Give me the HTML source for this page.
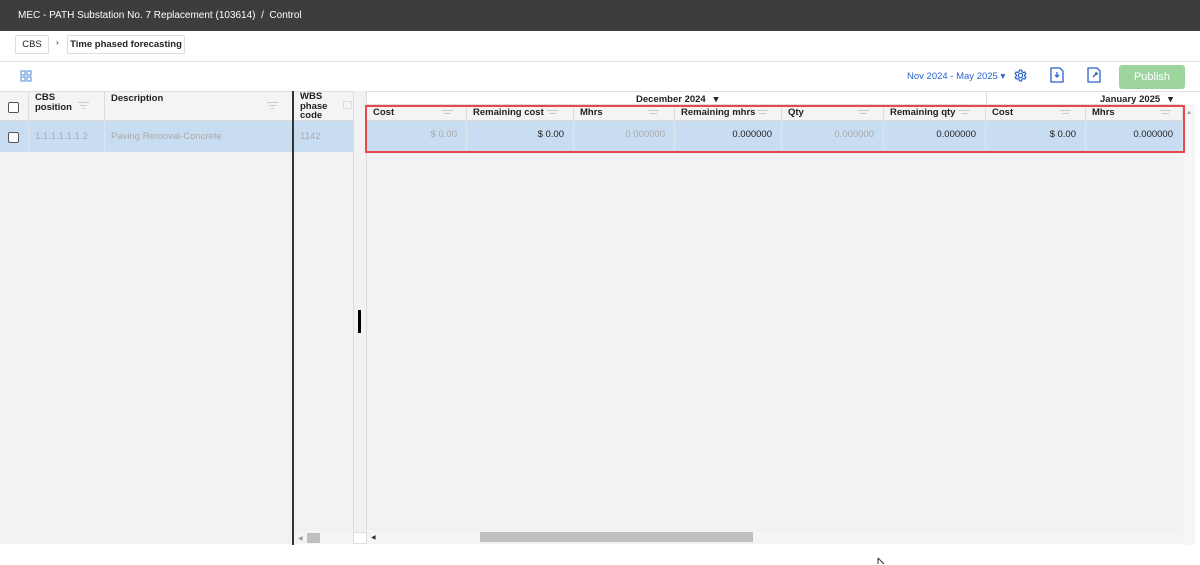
<!DOCTYPE html><html><head><style>
*{box-sizing:border-box;margin:0;padding:0}
body{width:1200px;height:565px;position:relative;overflow:hidden;background:#fff;font-family:"Liberation Sans",sans-serif;font-size:9.5px;color:#222}
.a{position:absolute}
.hd{font-weight:bold;font-size:9.5px;color:#222}
.f{position:absolute;width:11px;height:7px}
.f i{display:block;height:1px;background:#ccc;margin:0 auto 2px}
.g{color:#aaa}
.cell{position:absolute;top:121px;height:31px;line-height:28px;text-align:right;font-size:9.5px;border-right:1px solid #dde6ee;padding-right:9px}
.ch{position:absolute;top:105px;height:16px;border-right:1px solid #ddd;padding-left:6px;font-weight:bold;line-height:15px}
</style></head><body>
<div class="a" style="left:0;top:0;width:1200px;height:31px;background:#3d3d3d"></div>
<div class="a" style="left:18px;top:10px;color:#fff;font-size:10px">MEC - PATH Substation No. 7 Replacement (103614) &nbsp;/&nbsp; Control</div>
<div class="a" style="left:15px;top:35px;width:34px;height:19px;border:1px solid #ddd;border-radius:2px;text-align:center;line-height:17px">CBS</div>
<div class="a" style="left:56px;top:38px;font-size:8px">›</div>
<div class="a" style="left:67px;top:35px;width:118px;height:19px;border:1px solid #ddd;border-radius:2px;text-align:center;line-height:17px;font-weight:bold">Time phased forecasting</div>
<div class="a" style="left:0;top:61px;width:1200px;height:1px;background:#e4e4e4"></div>
<svg class="a" style="left:20px;top:70px" width="12" height="12"><g fill="none" stroke="#6a9fe0" stroke-width="1.2"><rect x="1" y="1" width="4" height="4"/><rect x="7" y="1" width="4" height="4"/><rect x="1" y="7" width="4" height="4"/><rect x="7" y="7" width="4" height="4"/></g></svg>
<div class="a" style="left:907px;top:71px;color:#2a62c9;font-size:9.5px">Nov 2024 - May 2025 ▾</div>
<svg class="a" style="left:1014px;top:69px" width="13" height="13" viewBox="0 0 24 24"><path fill="none" stroke="#2a62c9" stroke-width="2.2" d="M12 8a4 4 0 1 0 0 8a4 4 0 1 0 0-8zM10 2h4l.6 3 2.4 1.4 2.9-1 2 3.4-2.3 2v2.4l2.3 2-2 3.4-2.9-1-2.4 1.4-.6 3h-4l-.6-3-2.4-1.4-2.9 1-2-3.4 2.3-2V10.8L2 8.8l2-3.4 2.9 1L9.4 5z"/></svg>
<svg class="a" style="left:1050px;top:67px" width="14" height="16" viewBox="0 0 14 16"><path fill="none" stroke="#2a62c9" stroke-width="1.3" d="M1 1h9l3 3v11H1z M7 5v5 M5 8l2 2 2-2"/></svg>
<svg class="a" style="left:1087px;top:67px" width="14" height="16" viewBox="0 0 14 16"><path fill="none" stroke="#2a62c9" stroke-width="1.3" d="M1 1h9l3 3v11H1z M6 10l4-4 M8 6h2v2"/></svg>
<div class="a" style="left:1119px;top:65px;width:66px;height:24px;background:#9cd49c;border-radius:3px;color:#fff;font-size:11px;text-align:center;line-height:24px">Publish</div>
<div class="a" style="left:0;top:91px;width:1200px;height:1px;background:#e0e0e0"></div>
<div class="a" style="left:0;top:152px;width:292px;height:392px;background:#f2f2f2"></div>
<div class="a" style="left:293px;top:152px;width:60px;height:392px;background:#f2f2f2"></div>
<div class="a" style="left:353px;top:91px;width:14px;height:453px;background:#f2f2f2;border-left:1px solid #ddd;border-right:1px solid #ddd"></div>
<div class="a" style="left:367px;top:121px;width:816px;height:423px;background:#f2f2f2"></div>
<div class="a" style="left:1183px;top:105px;width:12px;height:440px;background:#f6f6f6"></div>
<div class="a" style="left:1186px;top:110px;font-size:6px;color:#999">▲</div>
<div class="a" style="left:0;top:92px;width:292px;height:29px;background:#f4f4f4;border-bottom:1px solid #ddd"></div>
<div class="a" style="left:28px;top:92px;width:1px;height:29px;background:#ddd"></div>
<div class="a" style="left:104px;top:92px;width:1px;height:29px;background:#ddd"></div>
<div class="a" style="left:8px;top:102px;width:11px;height:11px;border:1px solid #555;border-radius:2px;background:#fff"></div>
<div class="a hd" style="left:35px;top:93px;line-height:10px">CBS<br>position</div>
<div class="a hd" style="left:111px;top:93px">Description</div>
<div class="f" style="left:78px;top:102px"><i style="width:11px"></i><i style="width:7px"></i><i style="width:3px"></i></div>
<div class="f" style="left:267px;top:102px"><i style="width:11px"></i><i style="width:7px"></i><i style="width:3px"></i></div>
<div class="a" style="left:293px;top:92px;width:60px;height:29px;background:#f4f4f4;border-bottom:1px solid #ddd"></div>
<div class="a hd" style="left:300px;top:92px;line-height:9.5px">WBS<br>phase<br>code</div>
<div class="a" style="left:343px;top:101px;width:9px;height:8px;border:1px solid #ddd"></div>
<div class="a" style="left:0;top:121px;width:292px;height:31px;background:#c9ddf2"></div>
<div class="a" style="left:28px;top:121px;width:1px;height:31px;background:#dbe6f0"></div>
<div class="a" style="left:104px;top:121px;width:1px;height:31px;background:#dbe6f0"></div>
<div class="a" style="left:8px;top:132px;width:11px;height:11px;border:1px solid #555;border-radius:2px;background:#fff"></div>
<div class="a g" style="left:35px;top:131px">1.1.1.1.1.1.2</div>
<div class="a g" style="left:111px;top:131px">Paving Removal-Concrete</div>
<div class="a" style="left:293px;top:121px;width:60px;height:31px;background:#c9ddf2"></div>
<div class="a g" style="left:300px;top:131px">1142</div>
<div class="a" style="left:292px;top:91px;width:2px;height:454px;background:#333"></div>
<div class="a" style="left:358px;top:310px;width:3px;height:23px;background:#000"></div>
<div class="a" style="left:367px;top:92px;width:816px;height:13px;background:#fff;border-bottom:1px solid #ddd"></div>
<div class="a" style="left:986px;top:92px;width:1px;height:13px;background:#ddd"></div>
<div class="a hd" style="left:636px;top:94px">December 2024 &nbsp;&nbsp;▾</div>
<div class="a hd" style="left:1100px;top:94px">January 2025 &nbsp;&nbsp;▾</div>
<div class="a" style="left:367px;top:105px;width:816px;height:16px;background:#f4f4f4;border-bottom:1px solid #ddd"></div>
<div class="ch" style="left:367px;width:100px">Cost</div>
<div class="ch" style="left:467px;width:107px">Remaining cost</div>
<div class="ch" style="left:574px;width:101px">Mhrs</div>
<div class="ch" style="left:675px;width:107px">Remaining mhrs</div>
<div class="ch" style="left:782px;width:102px">Qty</div>
<div class="ch" style="left:884px;width:102px">Remaining qty</div>
<div class="ch" style="left:986px;width:100px">Cost</div>
<div class="ch" style="left:1086px;width:97px">Mhrs</div>
<div class="f" style="left:442px;top:110px"><i style="width:11px"></i><i style="width:7px"></i></div>
<div class="f" style="left:547px;top:110px"><i style="width:11px"></i><i style="width:7px"></i></div>
<div class="f" style="left:648px;top:110px"><i style="width:11px"></i><i style="width:7px"></i></div>
<div class="f" style="left:757px;top:110px"><i style="width:11px"></i><i style="width:7px"></i></div>
<div class="f" style="left:858px;top:110px"><i style="width:11px"></i><i style="width:7px"></i></div>
<div class="f" style="left:959px;top:110px"><i style="width:11px"></i><i style="width:7px"></i></div>
<div class="f" style="left:1060px;top:110px"><i style="width:11px"></i><i style="width:7px"></i></div>
<div class="f" style="left:1160px;top:110px"><i style="width:11px"></i><i style="width:7px"></i></div>
<div class="a" style="left:367px;top:121px;width:816px;height:31px;background:#c9ddf2"></div>
<div class="cell g" style="left:367px;width:100px">$ 0.00</div>
<div class="cell" style="left:467px;width:107px">$ 0.00</div>
<div class="cell g" style="left:574px;width:101px">0.000000</div>
<div class="cell" style="left:675px;width:107px">0.000000</div>
<div class="cell g" style="left:782px;width:102px">0.000000</div>
<div class="cell" style="left:884px;width:102px">0.000000</div>
<div class="cell" style="left:986px;width:100px">$ 0.00</div>
<div class="cell" style="left:1086px;width:97px">0.000000</div>
<div class="a" style="left:365px;top:105px;width:820px;height:48px;border:2px solid #e5484d"></div>
<div class="a" style="left:294px;top:532px;width:59px;height:12px;background:#f4f4f4"></div>
<div class="a" style="left:298px;top:535px;font-size:6px;color:#999">◀</div>
<div class="a" style="left:307px;top:533px;width:13px;height:10px;background:#c0c0c0"></div>
<div class="a" style="left:353px;top:532px;width:14px;height:12px;background:#fff;border:1px solid #ddd"></div>
<div class="a" style="left:367px;top:531px;width:816px;height:13px;background:#f4f4f4"></div>
<div class="a" style="left:371px;top:534px;font-size:6px;color:#333">◀</div>
<div class="a" style="left:480px;top:532px;width:273px;height:10px;background:#c0c0c0"></div>
<svg class="a" style="left:877px;top:557px" width="8" height="8"><path d="M1 1v6M1 1l6 6" stroke="#333" fill="none"/></svg>
</body></html>
